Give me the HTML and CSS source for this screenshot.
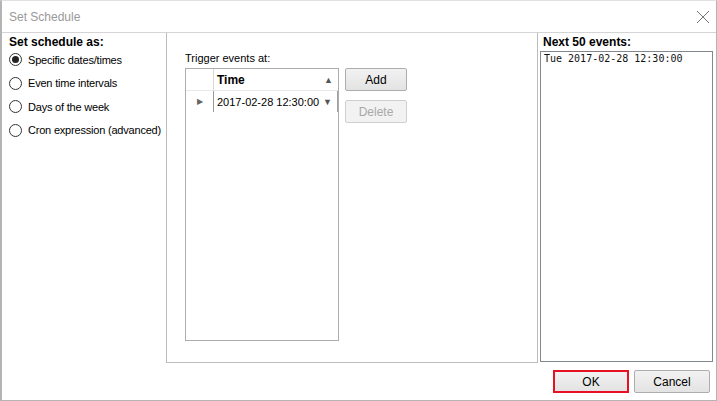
FILE: index.html
```html
<!DOCTYPE html>
<html lang="en">
<head>
<meta charset="UTF-8">
<title>Set Schedule</title>
<link rel="stylesheet" href="styles.css">
</head>
<body>
<div class="window">
    <div class="titlebar">
        <span class="title">Set Schedule</span>
        <svg class="close" width="14" height="14" viewBox="0 0 14 14">
            <path d="M1 1 L13 13 M13 1 L1 13" stroke="#777" stroke-width="1" fill="none"/>
        </svg>
    </div>
    <div class="main">
        <div class="left">
            <div class="heading">Set schedule as:</div>
            <div class="radio checked"><span class="dot"></span>Specific dates/times</div>
            <div class="radio"><span class="dot"></span>Even time intervals</div>
            <div class="radio"><span class="dot"></span>Days of the week</div>
            <div class="radio"><span class="dot"></span>Cron expression (advanced)</div>
        </div>
        <div class="middle">
            <div class="label">Trigger events at:</div>
            <div class="grid-row">
                <div class="grid">
                    <div class="grid-head">
                        <div class="rowhead"></div>
                        <div class="cell bold">Time<span class="arrow">&#9650;</span></div>
                    </div>
                    <div class="grid-line">
                        <div class="rowhead"><span class="marker">&#9654;</span></div>
                        <div class="cell">2017-02-28 12:30:00<span class="arrow">&#9660;</span></div>
                    </div>
                </div>
                <div class="buttons">
                    <button class="btn">Add</button>
                    <button class="btn" disabled>Delete</button>
                </div>
            </div>
        </div>
        <div class="right">
            <div class="heading">Next 50 events:</div>
            <div class="listbox">Tue 2017-02-28 12:30:00</div>
        </div>
    </div>
    <div class="footer">
        <button class="btn wide ok">OK</button>
        <button class="btn wide">Cancel</button>
    </div>
</div>
</body>
</html>
```

FILE: styles.css
```css
body {
  margin: 0;
  font-family: 'Liberation Sans', Arial, sans-serif;
  font-size: 11px;
  color: #000;
  background-color: #fff;
}

.window {
  width: 717px;
  height: 401px;
  box-sizing: border-box;
  border: 1px solid #b4b4b4;
  border-top-color: #e0e0e0;
  border-left: 2px solid #b4b4b4;
  display: flex;
  flex-direction: column;
  background-color: #fff;
}

.titlebar {
  height: 31px;
  border-bottom: 1px solid #d4d4d4;
  display: flex;
  align-items: center;
  justify-content: space-between;
  padding: 0 6px 0 7px;
}

.title {
  color: #999;
  font-size: 12px;
}

.main {
  display: flex;
  height: 330px;
}

.left {
  width: 157px;
  padding: 1px 0 0 7px;
}

.heading {
  font-weight: bold;
  font-size: 12px;
  height: 16px;
  line-height: 16px;
}

.radio {
  display: flex;
  align-items: center;
  height: 13px;
  margin-top: 10.6px;
  white-space: nowrap;
  letter-spacing: -0.2px;
}

.left .heading + .radio {
  margin-top: 3px;
}

.dot {
  width: 11px;
  height: 11px;
  border: 1px solid #333;
  border-radius: 50%;
  margin-right: 6px;
  display: flex;
  align-items: center;
  justify-content: center;
  flex-shrink: 0;
}

.checked .dot::after {
  content: '';
  width: 7px;
  height: 7px;
  border-radius: 50%;
  background-color: #222;
}

.middle {
  width: 372px;
  box-sizing: border-box;
  border: 1px solid #bcbcbc;
  border-top: none;
  padding: 17px 0 0 18px;
}

.label {
  height: 18px;
  line-height: 16px;
}

.grid-row {
  display: flex;
  align-items: flex-start;
}

.grid {
  width: 154px;
  height: 273px;
  box-sizing: border-box;
  border: 1px solid #acacac;
}

.grid-head, .grid-line {
  display: flex;
  height: 21px;
}

.grid-head {
  border-bottom: 1px solid #e8e8e8;
}

.grid-line {
  border-right: 1px solid #a0a0a0;
}

.rowhead {
  width: 27px;
  border-right: 1px solid #d8d8d8;
  display: flex;
  align-items: center;
  justify-content: center;
}

.grid-line .rowhead {
  border-right-color: #9a9a9a;
}

.marker {
  font-size: 8px;
  color: #666;
  margin-left: 1px;
}

.cell {
  flex: 1;
  display: flex;
  align-items: center;
  justify-content: space-between;
  padding: 0 5px 0 3px;
  white-space: nowrap;
}

.bold {
  font-weight: bold;
  font-size: 12px;
}

.arrow {
  font-size: 9px;
  color: #555;
}

.buttons {
  display: flex;
  flex-direction: column;
  gap: 9px;
  margin-left: 6px;
}

.btn {
  width: 62px;
  height: 23px;
  box-sizing: border-box;
  border: 1px solid #adadad;
  border-radius: 2px;
  background: linear-gradient(#f2f2f2, #e3e3e3);
  font-family: 'Liberation Sans', Arial, sans-serif;
  font-size: 12px;
  color: #000;
  padding: 0;
}

.btn:disabled {
  color: #a8a8a8;
  border-color: #cfcfcf;
  background: #f2f2f2;
}

.right {
  flex: 1;
  padding: 1px 0 0 2px;
}

.right .heading {
  margin-left: 3px;
  height: 17px;
}

.listbox {
  width: 173px;
  height: 311px;
  box-sizing: border-box;
  border: 1px solid #828790;
  font-family: 'DejaVu Sans Mono', monospace;
  font-size: 10px;
  color: #111;
  padding: 1px 3px;
}

.footer {
  flex: 1;
  display: flex;
  justify-content: flex-end;
  align-items: flex-start;
  gap: 5px;
  padding: 7px 6px 0 0;
}

.wide {
  width: 76px;
}

.ok {
  border: 2px solid #e81123;
  border-radius: 0;
}
```
